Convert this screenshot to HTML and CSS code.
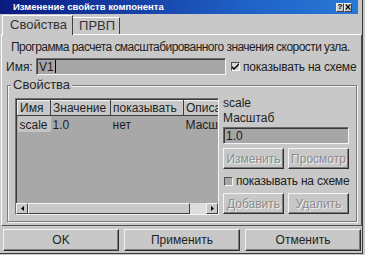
FILE: index.html
```html
<!DOCTYPE html>
<html lang="ru">
    <head>
        <meta charset="UTF-8" />
        <meta name="viewport" content="width=device-width, initial-scale=1.0" />
        <link rel="stylesheet" href="styles.css">
        <title>Изменение свойств компонента</title>
    </head>
    <body>
        <div class="window">
            <div class="titlebar">
                <span class="titlebar__text">Изменение свойств компонента</span>
                <div class="titlebar__buttons">
                    <span class="title-btn">?</span>
                    <span class="title-btn">
                        <svg width="7" height="6" viewBox="0 0 7 6">
                            <path d="M0 0h2l1.5 2 1.5-2h2l-2.5 3 2.5 3h-2l-1.5-2-1.5 2h-2l2.5-3z" fill="#000" />
                        </svg>
                    </span>
                </div>
            </div>

            <div class="tabs">
                <div class="tab tab--active">Свойства</div>
                <div class="tab">ПРВП</div>
            </div>

            <div class="panel">
                <p class="desc">Программа расчета смасштабированного значения скорости узла.</p>

                <div class="name-row">
                    <span class="name-row__label">Имя:</span>
                    <div class="field name-row__field">V1<span class="caret"></span></div>
                    <div class="check">
                        <span class="check__box">
                            <svg width="7" height="7" viewBox="0 0 7 7">
                                <path d="M0 3l2 2 5-5v2l-5 5-2-2z" fill="#000" />
                            </svg>
                        </span>
                        показывать на схеме
                    </div>
                </div>

                <fieldset class="group">
                    <legend class="group__title">Свойства</legend>
                    <div class="group__body">
                        <div class="list">
                            <div class="list__view">
                                <table class="list__table">
                                    <thead>
                                        <tr>
                                            <th class="col-name">Имя</th>
                                            <th class="col-value">Значение</th>
                                            <th class="col-show">показывать</th>
                                            <th class="col-desc">Описание</th>
                                        </tr>
                                    </thead>
                                    <tbody>
                                        <tr>
                                            <td class="cell--selected">scale</td>
                                            <td>1.0</td>
                                            <td>нет</td>
                                            <td>Масштаб</td>
                                        </tr>
                                    </tbody>
                                </table>
                            </div>
                            <div class="hscroll">
                                <span class="hscroll__btn">
                                    <svg width="3" height="5" viewBox="0 0 3 5"><path d="M3 0v5L0 2.5z" fill="#000" /></svg>
                                </span>
                                <span class="hscroll__thumb"></span>
                                <span class="hscroll__track"></span>
                                <span class="hscroll__btn">
                                    <svg width="3" height="5" viewBox="0 0 3 5"><path d="M0 0v5l3-2.5z" fill="#000" /></svg>
                                </span>
                            </div>
                        </div>

                        <div class="side">
                            <div class="side__name">scale</div>
                            <div class="side__label">Масштаб</div>
                            <div class="field side__field">1.0</div>
                            <div class="side__buttons">
                                <button class="btn btn--disabled">Изменить</button>
                                <button class="btn btn--disabled">Просмотр</button>
                            </div>
                            <div class="check side__check">
                                <span class="check__box check__box--off"></span>
                                показывать на схеме
                            </div>
                            <div class="side__buttons side__buttons--bottom">
                                <button class="btn btn--disabled">Добавить</button>
                                <button class="btn btn--disabled">Удалить</button>
                            </div>
                        </div>
                    </div>
                </fieldset>
            </div>

            <div class="footer">
                <button class="btn btn--wide">OK</button>
                <button class="btn btn--wide">Применить</button>
                <button class="btn btn--wide">Отменить</button>
            </div>
        </div>
    </body>
</html>
```

FILE: styles.css
```css
*,
*::before,
*::after {
    box-sizing: border-box;
}

body,
p,
fieldset,
legend {
    margin: 0;
    padding: 0;
}

body {
    width: 365px;
    height: 255px;
    overflow: hidden;
    background: #c8c8c8;
    color: #1e1e1e;
    font-family: 'Liberation Sans', Arial, sans-serif;
    font-size: 12px;
    line-height: 14px;
}

.window {
    width: 363px;
    height: 254px;
    border-right: 1px solid #3a3a3a;
    border-bottom: 1px solid #3a3a3a;
    background: #c8c8c8;
}

/* title bar */

.titlebar {
    height: 14px;
    margin-right: 4px;
    padding: 0 6px 0 13px;
    display: flex;
    align-items: center;
    justify-content: space-between;
    background: linear-gradient(to right, #0b1a80, #1f63c8 70%, #2a78d6);
}

.titlebar__text {
    color: #fff;
    font-size: 9.5px;
    font-weight: 700;
    line-height: 12px;
}

.titlebar__buttons {
    display: flex;
}

.title-btn {
    width: 8px;
    height: 9px;
    display: flex;
    align-items: center;
    justify-content: center;
    background: #c8c8c8;
    border: 1px solid;
    border-color: #f0f0f0 #404040 #404040 #f0f0f0;
    font-size: 8px;
    font-weight: 700;
    line-height: 8px;
    color: #000;
}

/* tabs */

.tabs {
    height: 20px;
    padding: 1px 0 0 2px;
    display: flex;
    align-items: flex-end;
}

.tab {
    border: 1px solid;
    border-bottom: none;
    border-color: #fff #404040 transparent #fff;
    font-size: 13px;
    color: #333;
}

.tab--active {
    position: relative;
    z-index: 1;
    height: 20px;
    margin-bottom: -1px;
    padding: 0 5px 0 7px;
    line-height: 17px;
    background: #c8c8c8;
}

.tab:not(.tab--active) {
    height: 17px;
    margin-left: -1px;
    padding: 0 4px 0 6px;
    line-height: 16px;
}

/* panel */

.panel {
    width: 361px;
    height: 192px;
    margin-left: 1px;
    padding: 5px 4px 0;
    border: 1px solid;
    border-color: #fff #505050 #505050 #fff;
}

.desc {
    margin-left: 5px;
    white-space: nowrap;
    letter-spacing: -0.55px;
}

.name-row {
    height: 17px;
    margin-top: 4px;
    display: flex;
    align-items: center;
}

.name-row__label {
    flex: none;
    width: 30px;
}

.field {
    height: 17px;
    padding: 0 2px;
    display: flex;
    align-items: center;
    background: #a6a6a6;
    border: 1px solid;
    border-color: #6a6a6a #f4f4f4 #f4f4f4 #6a6a6a;
    box-shadow: inset 1px 1px 0 #3a3a3a;
    color: #1a1a1a;
}

.name-row__field {
    flex: none;
    width: 190px;
}

.caret {
    width: 1px;
    height: 13px;
    margin-left: 1px;
    background: #000;
}

.check {
    display: flex;
    align-items: center;
    gap: 3px;
    white-space: nowrap;
    letter-spacing: -0.2px;
}

.name-row .check {
    flex: none;
    margin-left: 5px;
}

.check__box {
    flex: none;
    width: 9px;
    height: 9px;
    display: flex;
    align-items: center;
    justify-content: center;
    background: #d8d8d8;
    border: 1px solid;
    border-color: #505050 #f4f4f4 #f4f4f4 #505050;
}

.check__box--off {
    background: #a6a6a6;
}

/* properties group */

.group {
    width: 350px;
    height: 144px;
    margin: 3px 0 0 1px;
    padding: 0 7px 6px 7px;
    border: 1px solid #7c7c7c;
    box-shadow: 1px 1px 0 #f4f4f4, inset 1px 1px 0 #f4f4f4;
    min-width: 0;
}

.group__title {
    margin-left: -4px;
    padding: 0 2px;
    background: #c8c8c8;
    font-size: 13px;
    line-height: 14px;
    color: #2a2a2a;
}

.group__body {
    display: flex;
    gap: 4px;
    margin-top: 6px;
}

.list {
    flex: none;
    width: 204px;
    height: 117px;
    display: flex;
    flex-direction: column;
    border: 1px solid;
    border-color: #707070 #f4f4f4 #f4f4f4 #707070;
    box-shadow: inset 1px 1px 0 #3a3a3a;
    background: #a8a8a8;
}

.list__view {
    flex: 1;
    overflow: hidden;
    padding: 1px 0 0 1px;
}

.list__table {
    border-collapse: collapse;
    table-layout: fixed;
    width: 200px;
    white-space: nowrap;
}

.list__table th {
    height: 15px;
    padding: 0 2px;
    text-align: left;
    font-weight: 400;
    background: #c8c8c8;
    border: 1px solid;
    border-color: #f4f4f4 #404040 #404040 #f4f4f4;
    overflow: hidden;
}

.list__table td {
    height: 16px;
    padding: 2px 2px 0;
    overflow: hidden;
}

.list__table .col-desc {
    border-right: none;
}

.col-name {
    width: 33px;
}

.col-value {
    width: 60px;
}

.col-show {
    width: 73px;
}

.col-desc {
    width: 34px;
}

.list__table .cell--selected {
    background: #c4c4c4;
}

.hscroll {
    height: 11px;
    display: flex;
}

.hscroll__btn {
    width: 12px;
    display: flex;
    align-items: center;
    justify-content: center;
    background: #c8c8c8;
    border: 1px solid;
    border-color: #f4f4f4 #404040 #404040 #f4f4f4;
}

.hscroll__thumb {
    width: 162px;
    background: #c8c8c8;
    border: 1px solid;
    border-color: #f4f4f4 #404040 #404040 #f4f4f4;
}

.hscroll__track {
    flex: 1;
    background: #dedede;
}

.side {
    width: 126px;
    display: flex;
    flex-direction: column;
}

.side__name {
    margin-top: -1px;
    line-height: 12px;
}

.side__label {
    margin-top: 3px;
    line-height: 12px;
}

.side__field {
    margin-top: 3px;
}

.side__buttons {
    margin-top: 4px;
    display: flex;
    justify-content: space-between;
}

.side__buttons .btn {
    width: 61px;
    height: 21px;
}

.side__check {
    margin-top: 6px;
    height: 12px;
    padding-left: 1px;
}

.side__buttons--bottom {
    margin-top: 6px;
}

/* buttons */

.btn {
    padding: 0;
    font-family: inherit;
    font-size: 12px;
    line-height: 14px;
    color: #1e1e1e;
    background: #c8c8c8;
    border: 1px solid;
    border-color: #f4f4f4 #303030 #303030 #f4f4f4;
    box-shadow: inset -1px -1px 0 #7c7c7c;
}

.btn--disabled {
    color: #8c8c8c;
    text-shadow: 1px 1px 0 #f0f0f0;
}

.footer {
    padding: 3px 0 0 3px;
    display: flex;
    gap: 5px;
}

.btn--wide {
    width: 116px;
    height: 22px;
}
```
